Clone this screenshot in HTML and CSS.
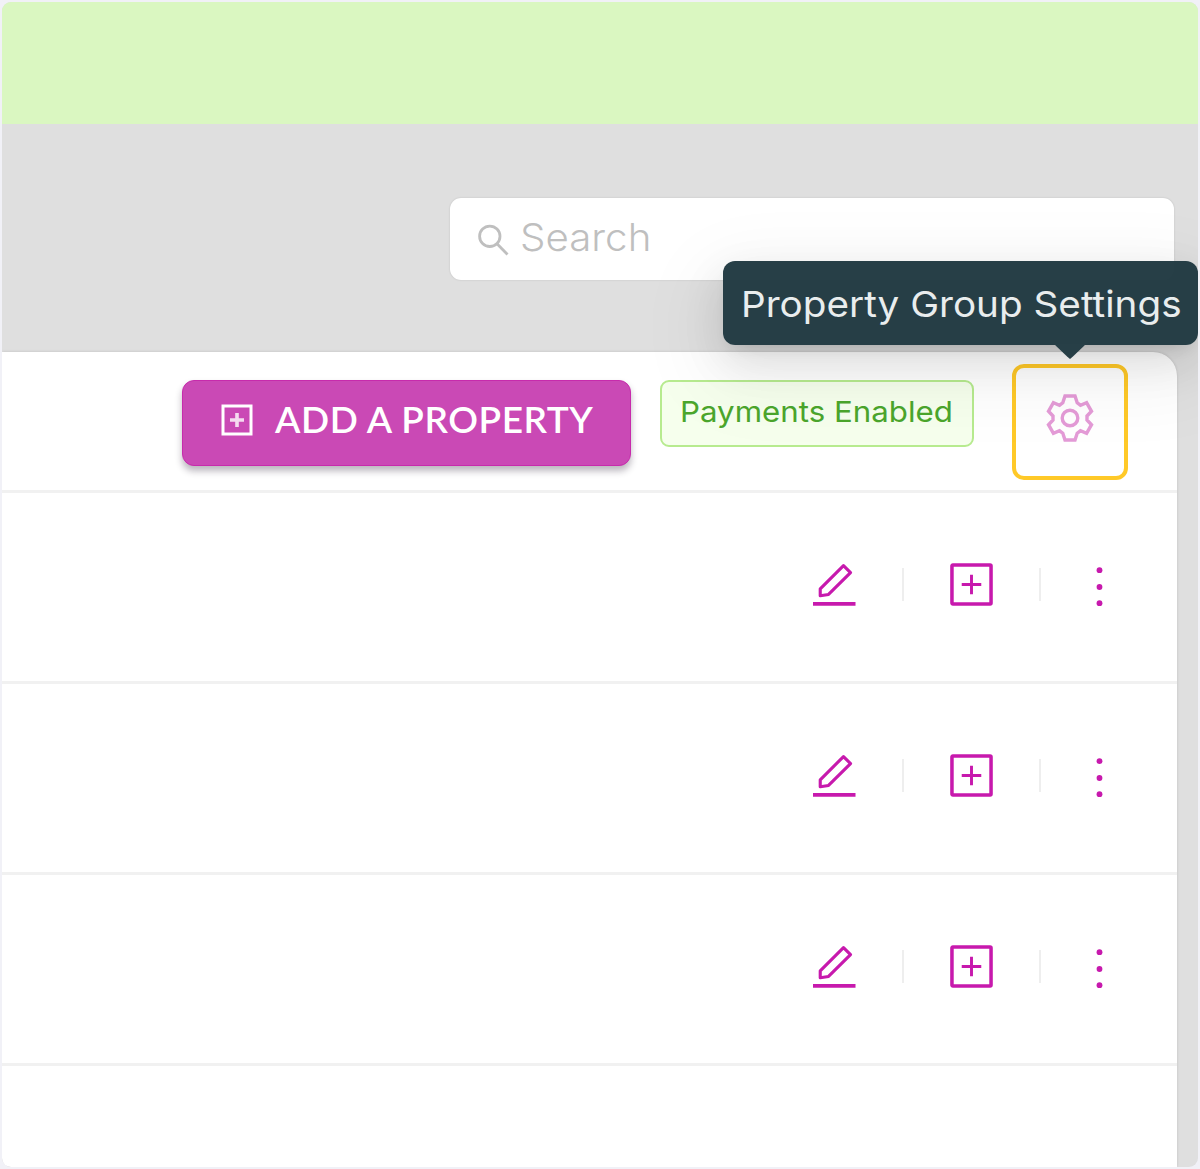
FILE: index.html
```html
<!DOCTYPE html>
<html lang="en">
<head>
<meta charset="utf-8">
<title>Properties</title>
<link rel="stylesheet" href="styles.css">
</head>
<body>
<svg class="defs" aria-hidden="true">
  <symbol id="plus" viewBox="0 0 44 44"><rect x="2" y="2" width="40" height="40" rx="1" stroke-width="3.6"/><path d="M22 12v20M12 22h20" stroke-width="3"/></symbol>
  <symbol id="plus-bold" viewBox="0 0 32 32"><rect x="2" y="2" width="28" height="28" stroke-width="3"/><path d="M16 9v14M9 16h14" stroke-width="3.6" opacity=".8"/></symbol>
  <symbol id="edit" viewBox="0 0 44 44"><path d="M0 41.8h43.5" stroke-width="3.8"/><path d="M7.4 33.5V26.5L31.2 2.6L38.4 9.8L15.9 32.2Z" stroke-width="3.2" stroke-linejoin="round"/></symbol>
  <symbol id="more" viewBox="0 0 10 44"><g fill="currentColor" stroke="none"><circle cx="5.5" cy="7.2" r="2.9"/><circle cx="5.5" cy="24" r="2.9"/><circle cx="5.5" cy="40.2" r="2.9"/></g></symbol>
</svg>
<div class="frame">
  <header class="banner"></header>
  <div class="toolbar">
    <div class="search">
      <svg class="search-icon" viewBox="0 0 32 32"><circle cx="12.8" cy="12.3" r="10.2"/><path d="M20 19.8l10.5 10.7"/></svg>
      <span class="search-text">Search</span>
    </div>
  </div>
  <main class="panel">
    <div class="panel-head">
      <button class="add"><svg class="add-icon"><use href="#plus-bold"/></svg><span class="add-text">ADD A PROPERTY</span></button>
      <div class="tag"><span class="tag-text">Payments Enabled</span></div>
      <div class="settings">
        <svg class="gear" viewBox="-25 -25 50 50"><path d="M-7.2-15.2L-5-22H5L7.2-15.2L10.5-12.8L16.6-15.4L21.5-6.7L17-2V2L21.5 6.7L16.6 15.4L10.5 12.8L7.2 15.2L5 22H-5L-7.2 15.2L-10.5 12.8L-16.6 15.4L-21.5 6.7L-17 2V-2L-21.5-6.7L-16.6-15.4L-10.5-12.8Z"/><circle r="7.8"/></svg>
        <div class="tooltip"><span class="tooltip-text">Property Group Settings</span></div>
      </div>
    </div>
    <div class="row"><svg class="icon"><use href="#edit"/></svg><i class="sep"></i><svg class="icon"><use href="#plus"/></svg><i class="sep"></i><svg class="dots"><use href="#more"/></svg></div>
    <div class="row"><svg class="icon"><use href="#edit"/></svg><i class="sep"></i><svg class="icon"><use href="#plus"/></svg><i class="sep"></i><svg class="dots"><use href="#more"/></svg></div>
    <div class="row"><svg class="icon"><use href="#edit"/></svg><i class="sep"></i><svg class="icon"><use href="#plus"/></svg><i class="sep"></i><svg class="dots"><use href="#more"/></svg></div>
  </main>
</div>
</body>
</html>
```
FILE: styles.css
```css
* { box-sizing: border-box; }
body { margin: 0; padding: 2px; height: 1169px; background: #f1f1f7; font-family: Inter, "Open Sans", sans-serif; overflow: hidden; }
svg { display: block; flex: none; fill: none; stroke: currentColor; }
span { white-space: nowrap; transform-origin: left center; }
.defs { display: none; }
.frame { width: 1196px; height: 1165px; border-radius: 9px; overflow: hidden; background: #dfdfdf; display: flex; flex-direction: column; }
.banner { height: 122px; flex: none; background: #daf7c1; }
.toolbar { height: 228px; flex: none; padding: 74px 24px 0 448px; }
.search { height: 82px; border-radius: 11px; background: #fff; box-shadow: 0 0 2px rgba(0,0,0,.16); display: flex; align-items: center; padding: 0 0 2px 27px; color: #bfbfbf; }
.search-icon { width: 32px; height: 32px; stroke-width: 2.8; margin-top: 3px; }
.search-text { margin-left: 11px; font-size: 38px; font-weight: 300; line-height: 46px; transform: scaleX(1.06); margin-top: -2px; }
.panel { width: 1175px; flex: 1; background: #fff; border-top-right-radius: 24px; box-shadow: 0 0 3px rgba(0,0,0,.15); }
.panel-head { height: 141px; border-bottom: 3px solid #f1f1f1; padding: 12px 49px 0 180px; display: flex; align-items: flex-start; }
.add { width: 449px; height: 86px; margin: 16px 29px 0 0; padding: 0 0 6px 38px; border: 1px solid #c72bac; border-radius: 12px; background: #ca49b5; color: #fff; font-family: Lato, sans-serif; display: flex; align-items: center; box-shadow: 0 5px 7px rgba(30,15,40,.3); }
.add-icon { width: 32px; height: 32px; }
.add-text { margin: -3px 0 0 22px; font-size: 37px; font-weight: 600; line-height: 46px; letter-spacing: .55px; }
.tag { width: 314px; height: 67px; margin: 16px 38px 0 0; padding: 0 0 4px 18px; border: 2px solid #b7eb8f; border-radius: 9px; background: #f6ffed; color: #4ba62c; display: flex; align-items: center; }
.tag-text { font-size: 29px; line-height: 36px; transform: scaleX(1.078); }
.settings { position: relative; width: 116px; height: 116px; border: 4px solid #ffc928; border-radius: 12px; display: flex; align-items: center; justify-content: center; padding-bottom: 9px; color: #e49bd7; }
.gear { width: 50px; height: 50px; stroke-width: 3.4; }
.tooltip { position: absolute; left: -293px; top: -107px; width: 475px; height: 84px; padding: 1px 0 0 18px; border-radius: 12px; background: rgba(32,57,65,.97); color: #e9edee; display: flex; align-items: center; box-shadow: 0 8px 16px -8px rgba(0,0,0,.14), 0 16px 43px rgba(0,0,0,.1), 0 24px 75px 21px rgba(0,0,0,.05); }
.tooltip::after { content: ""; position: absolute; left: 331px; top: 83px; width: 32px; height: 15px; background: #273f47; clip-path: polygon(0 0, 100% 0, 60% 82%, 50% 100%, 40% 82%); }
.tooltip-text { font-size: 36px; line-height: 44px; transform: scaleX(1.074); }
.row { height: 191px; border-bottom: 3px solid #f1f1f1; padding: 0 73px 5px 0; display: flex; align-items: center; justify-content: flex-end; color: #c719ad; }
.icon { width: 43px; height: 43px; }
.dots { width: 10px; height: 44px; margin-left: 53px; }
.sep { width: 2px; height: 33px; margin: 0 46px; background: #eee; }
.sep:nth-of-type(2) { margin-right: 0; }
```
